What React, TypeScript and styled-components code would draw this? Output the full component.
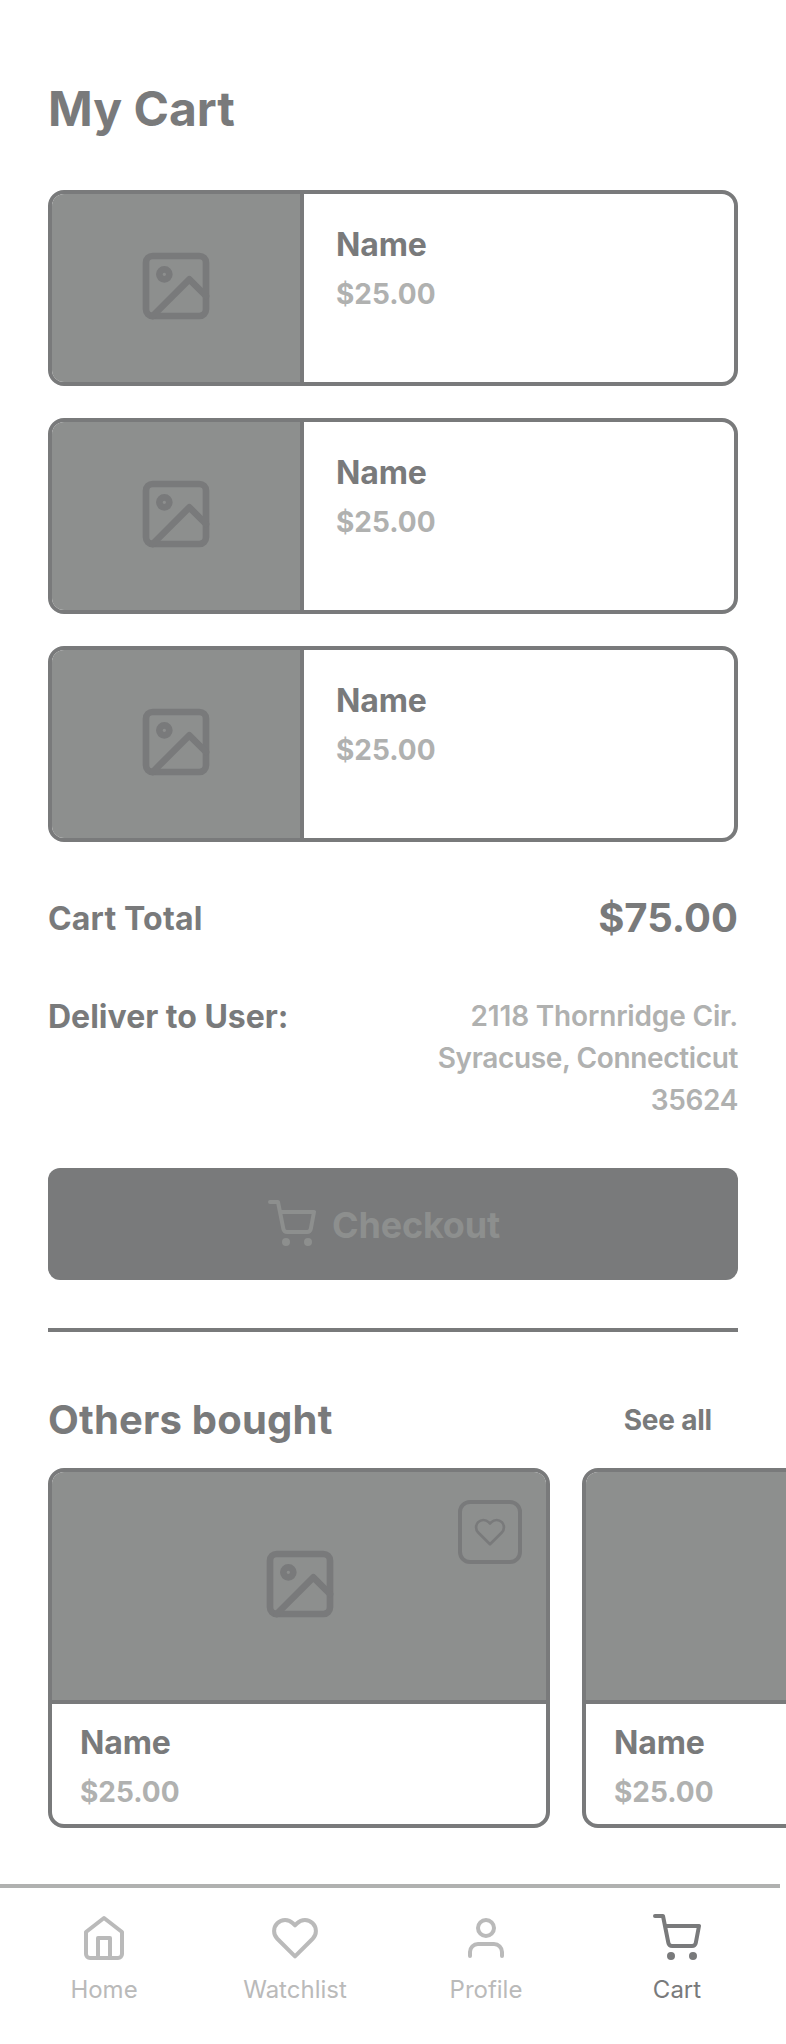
import React from "react";
import styled, { createGlobalStyle } from "styled-components";

const dark = "#797a7b";
const fill = "#8d8f8e";
const light = "#b0b1b0";

const Global = createGlobalStyle`
  * { box-sizing: border-box; }
  body { margin: 0; background: #fff; font-family: Inter, "Liberation Sans", sans-serif; color: ${dark}; overflow: hidden; }
  h1, h2, h3, p { margin: 0; }
`;

const Screen = styled.div`
  width: 786px;
  height: 2044px;
  display: flex;
  flex-direction: column;
  overflow: hidden;
`;
const Main = styled.main`
  padding: 80px 48px 0;
  height: 1884px;
`;
const Title = styled.h1`
  font-size: 48px;
  line-height: 58px;
  font-weight: 700;
`;
const CartList = styled.div`
  display: flex;
  flex-direction: column;
  gap: 32px;
  margin-top: 52px;
`;
const CartCard = styled.article`
  height: 196px;
  border: 4px solid ${dark};
  border-radius: 16px;
  display: flex;
  overflow: hidden;
`;
const Thumb = styled.div`
  width: 252px;
  padding-bottom: 4px;
  background: ${fill};
  border-right: 4px solid ${dark};
  display: grid;
  place-items: center;
`;
const Info = styled.div<{ $pad: string }>`
  padding: ${(p) => p.$pad};
`;
const Name = styled.h3`
  font-size: 32px;
  line-height: 40px;
  font-weight: 700;
  letter-spacing: -0.1px;
`;
const Price = styled.p`
  margin-top: 9px;
  font-size: 28px;
  line-height: 40px;
  font-weight: 700;
  color: ${light};
`;
const SummaryRow = styled.div<{ $top: number }>`
  display: flex;
  justify-content: space-between;
  align-items: flex-start;
  margin-top: ${(p) => p.$top}px;
`;
const Large = styled.p<{ $track?: number }>`
  font-size: 40px;
  line-height: 47px;
  font-weight: 700;
  letter-spacing: ${(p) => p.$track ?? 0}px;
`;
const Label = styled.p<{ $track?: number }>`
  font-size: 32px;
  line-height: 49px;
  font-weight: 700;
  letter-spacing: ${(p) => p.$track ?? 0}px;
`;
const Address = styled.div`
  margin-top: 3px;
  font-size: 28px;
  line-height: 42px;
  font-weight: 600;
  color: ${light};
  text-align: right;
`;
const AddressLine = styled.p<{ $track: number }>`
  letter-spacing: ${(p) => p.$track}px;
`;
const Checkout = styled.button`
  display: flex;
  width: 100%;
  height: 112px;
  margin-top: 47px;
  padding: 0 18px 0 0;
  border: 0;
  border-radius: 12px;
  background: ${dark};
  color: ${fill};
  align-items: center;
  justify-content: center;
  gap: 16px;
  font: 700 36px Inter, "Liberation Sans", sans-serif;
  letter-spacing: -0.2px;
`;
const CheckoutLabel = styled.span`
  padding-top: 2px;
`;
const Divider = styled.div`
  height: 4px;
  background: ${dark};
  margin-top: 48px;
`;
const SectionHead = styled.div`
  display: flex;
  justify-content: space-between;
  align-items: flex-start;
  margin-top: 64px;
  padding-right: 26px;
`;
const SeeAll = styled.span`
  margin-top: 7px;
  font-size: 28px;
  line-height: 34px;
  font-weight: 700;
  letter-spacing: -0.2px;
`;
const Products = styled.div`
  display: flex;
  gap: 32px;
  margin-top: 25px;
`;
const Product = styled.article`
  flex: none;
  width: 502px;
  height: 360px;
  border: 4px solid ${dark};
  border-radius: 16px;
  overflow: hidden;
`;
const Cover = styled.div`
  position: relative;
  height: 232px;
  padding: 0 0 4px 2px;
  background: ${fill};
  border-bottom: 4px solid ${dark};
  display: grid;
  place-items: center;
`;
const Favorite = styled.div`
  position: absolute;
  right: 24px;
  top: 28px;
  width: 64px;
  height: 64px;
  border: 4px solid ${dark};
  border-radius: 12px;
  display: grid;
  place-items: center;
`;
const Nav = styled.nav`
  width: 780px;
  height: 160px;
  border-top: 4px solid ${light};
  display: flex;
  padding: 26px 7.5px 0 8.5px;
`;
const NavItem = styled.div<{ $active?: boolean }>`
  flex: 1;
  display: flex;
  flex-direction: column;
  align-items: center;
  gap: 10px;
  font-size: 24px;
  line-height: 35px;
  color: ${(p) => (p.$active ? dark : "#bababa")};
`;
const Glyph = styled.svg`
  display: block;
  fill: none;
  stroke: currentColor;
  stroke-width: 2;
  stroke-linecap: round;
  stroke-linejoin: round;
`;

type IconProps = { size: number };

const Svg = ({ size, children }: IconProps & { children: React.ReactNode }) => (
  <Glyph width={size} height={size} viewBox="0 0 24 24">{children}</Glyph>
);
const ImageIcon = () => (
  <Svg size={80}>
    <rect x="3" y="3" width="18" height="18" rx="2" />
    <circle cx="8.5" cy="8.5" r="1.5" />
    <path d="M21 15 16 10 5 21" />
  </Svg>
);
const CartIcon = ({ size }: IconProps) => (
  <Svg size={size}>
    <circle cx="9" cy="21" r="1" />
    <circle cx="20" cy="21" r="1" />
    <path d="M1 1h4l2.68 13.39a2 2 0 0 0 2 1.61h9.72a2 2 0 0 0 2-1.61L23 6H6" />
  </Svg>
);
const HeartIcon = ({ size }: IconProps) => (
  <Svg size={size}>
    <path d="M20.84 4.61a5.5 5.5 0 0 0-7.78 0L12 5.67l-1.06-1.06a5.5 5.5 0 0 0-7.78 7.78L12 21.23l8.84-8.84a5.5 5.5 0 0 0 0-7.78z" />
  </Svg>
);
const HomeIcon = ({ size }: IconProps) => (
  <Svg size={size}>
    <path d="m3 9 9-7 9 7v11a2 2 0 0 1-2 2H5a2 2 0 0 1-2-2z" />
    <path d="M9 22V12h6v10" />
  </Svg>
);
const UserIcon = ({ size }: IconProps) => (
  <Svg size={size}>
    <path d="M20 21v-2a4 4 0 0 0-4-4H8a4 4 0 0 0-4 4v2" />
    <circle cx="12" cy="7" r="4" />
  </Svg>
);

export default function App() {
  return (
    <Screen>
      <Global />
      <Main>
        <Title>My Cart</Title>
        <CartList>
          {[0, 1, 2].map((i) => (
            <CartCard key={i}>
              <Thumb><ImageIcon /></Thumb>
              <Info $pad="31px 32px"><Name>Name</Name><Price>$25.00</Price></Info>
            </CartCard>
          ))}
        </CartList>
        <SummaryRow $top={52}>
          <Label $track={0.17}>Cart Total</Label>
          <Large>$75.00</Large>
        </SummaryRow>
        <SummaryRow $top={49}>
          <Label>Deliver to User:</Label>
          <Address>
            <AddressLine $track={-0.17}>2118 Thornridge Cir.</AddressLine>
            <AddressLine $track={-0.36}>Syracuse, Connecticut</AddressLine>
            <AddressLine $track={-0.36}>35624</AddressLine>
          </Address>
        </SummaryRow>
        <Checkout><CartIcon size={48} /><CheckoutLabel>Checkout</CheckoutLabel></Checkout>
        <Divider />
        <SectionHead>
          <Large as="h2" $track={0.2}>Others bought</Large>
          <SeeAll>See all</SeeAll>
        </SectionHead>
        <Products>
          {[0, 1].map((i) => (
            <Product key={i}>
              <Cover><ImageIcon /><Favorite><HeartIcon size={32} /></Favorite></Cover>
              <Info $pad="19px 28px"><Name>Name</Name><Price>$25.00</Price></Info>
            </Product>
          ))}
        </Products>
      </Main>
      <Nav>
        <NavItem><HomeIcon size={48} />Home</NavItem>
        <NavItem><HeartIcon size={48} />Watchlist</NavItem>
        <NavItem><UserIcon size={48} />Profile</NavItem>
        <NavItem $active><CartIcon size={48} />Cart</NavItem>
      </Nav>
    </Screen>
  );
}
